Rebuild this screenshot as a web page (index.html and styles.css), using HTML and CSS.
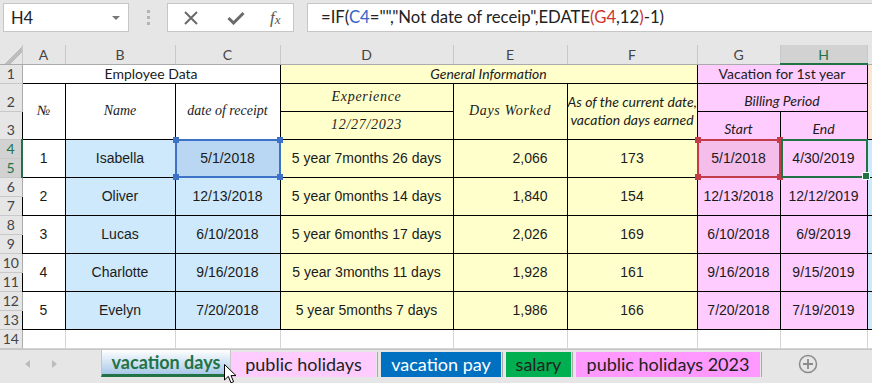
FILE: index.html
```html
<!DOCTYPE html>
<html lang="en">

<head>
    <meta charset="UTF-8">
    <meta name="viewport" content="width=device-width, initial-scale=1.0">
    <title>vacation days</title>
    <link rel="stylesheet" href="styles.css">
</head>

<body>
    <!-- formula bar -->
    <div class="bar">
        <div class="namebox">H4<i class="drop"></i></div>
        <div class="grip"><i></i><i></i><i></i></div>
        <div class="fxbox">
            <svg width="16" height="14" viewBox="0 0 16 14"><path d="M2 1 L14 13 M14 1 L2 13" stroke="#6a6a6a" stroke-width="2" fill="none"/></svg>
            <svg width="18" height="14" viewBox="0 0 18 14"><path d="M1.5 7 L6.5 12 L16.5 2" stroke="#6a6a6a" stroke-width="3" fill="none"/></svg>
            <span class="fx">f<sub>x</sub></span>
        </div>
        <div class="formula">=IF(<span class="rc">C4</span>="","Not date of receip",EDATE<span class="rg">(G4</span>,12<span class="rg">)</span>-1)</div>
    </div>

    <table class="sheet">
        <colgroup>
            <col style="width:22px">
            <col style="width:43px">
            <col style="width:110px">
            <col style="width:105px">
            <col style="width:173px">
            <col style="width:114px">
            <col style="width:130px">
            <col style="width:83px">
            <col style="width:87px">
            <col style="width:40px">
        </colgroup>
        <tr class="colhead">
            <th class="corner"></th>
            <th>A</th>
            <th>B</th>
            <th>C</th>
            <th>D</th>
            <th>E</th>
            <th>F</th>
            <th>G</th>
            <th class="on">H</th>
            <th></th>
        </tr>
        <tr>
            <th class="rn">1</th>
            <td colspan="3" class="w cal">Employee Data</td>
            <td colspan="3" class="y cali">General Information</td>
            <td colspan="2" class="p cal">Vacation for 1st year</td>
            <td rowspan="3" class="o"></td>
        </tr>
        <tr class="tall">
            <th class="rn">2</th>
            <td rowspan="2" class="w hs">№</td>
            <td rowspan="2" class="w hs">Name</td>
            <td rowspan="2" class="w hs">date of receipt</td>
            <td class="y hs wide">Experience</td>
            <td rowspan="2" class="y hs wide">Days Worked</td>
            <td rowspan="2" class="y small">As of the current date,<br>vacation days earned</td>
            <td colspan="2" class="p cali bot">Billing Period</td>
        </tr>
        <tr class="tall">
            <th class="rn">3</th>
            <td class="y hs wide">12/27/2023</td>
            <td class="p cali bot">Start</td>
            <td class="p cali bot">End</td>
        </tr>
        <tr>
            <th class="rn on">4</th>
            <td rowspan="2" class="w">1</td>
            <td rowspan="2" class="b">Isabella</td>
            <td rowspan="2" class="b selc">5/1/2018</td>
            <td rowspan="2" class="y">5 year 7months 26 days</td>
            <td rowspan="2" class="y num">2,066</td>
            <td rowspan="2" class="y">173</td>
            <td rowspan="2" class="p selg">5/1/2018</td>
            <td rowspan="2" class="p selh">4/30/2019</td>
            <td rowspan="2" class="b"></td>
        </tr>
        <tr>
            <th class="rn on">5</th>
        </tr>
        <tr>
            <th class="rn">6</th>
            <td rowspan="2" class="w">2</td>
            <td rowspan="2" class="b">Oliver</td>
            <td rowspan="2" class="b">12/13/2018</td>
            <td rowspan="2" class="y">5 year 0months 14 days</td>
            <td rowspan="2" class="y num">1,840</td>
            <td rowspan="2" class="y">154</td>
            <td rowspan="2" class="p">12/13/2018</td>
            <td rowspan="2" class="p">12/12/2019</td>
            <td rowspan="2" class="b"></td>
        </tr>
        <tr>
            <th class="rn">7</th>
        </tr>
        <tr>
            <th class="rn">8</th>
            <td rowspan="2" class="w">3</td>
            <td rowspan="2" class="b">Lucas</td>
            <td rowspan="2" class="b">6/10/2018</td>
            <td rowspan="2" class="y">5 year 6months 17 days</td>
            <td rowspan="2" class="y num">2,026</td>
            <td rowspan="2" class="y">169</td>
            <td rowspan="2" class="p">6/10/2018</td>
            <td rowspan="2" class="p">6/9/2019</td>
            <td rowspan="2" class="b"></td>
        </tr>
        <tr>
            <th class="rn">9</th>
        </tr>
        <tr>
            <th class="rn">10</th>
            <td rowspan="2" class="w">4</td>
            <td rowspan="2" class="b">Charlotte</td>
            <td rowspan="2" class="b">9/16/2018</td>
            <td rowspan="2" class="y">5 year 3months 11 days</td>
            <td rowspan="2" class="y num">1,928</td>
            <td rowspan="2" class="y">161</td>
            <td rowspan="2" class="p">9/16/2018</td>
            <td rowspan="2" class="p">9/15/2019</td>
            <td rowspan="2" class="b"></td>
        </tr>
        <tr>
            <th class="rn">11</th>
        </tr>
        <tr>
            <th class="rn">12</th>
            <td rowspan="2" class="w">5</td>
            <td rowspan="2" class="b">Evelyn</td>
            <td rowspan="2" class="b">7/20/2018</td>
            <td rowspan="2" class="y">5 year 5months 7 days</td>
            <td rowspan="2" class="y num">1,986</td>
            <td rowspan="2" class="y">166</td>
            <td rowspan="2" class="p">7/20/2018</td>
            <td rowspan="2" class="p">7/19/2019</td>
            <td rowspan="2" class="b"></td>
        </tr>
        <tr>
            <th class="rn">13</th>
        </tr>
        <tr class="empty">
            <th class="rn">14</th>
            <td></td>
            <td></td>
            <td></td>
            <td></td>
            <td></td>
            <td></td>
            <td></td>
            <td></td>
            <td></td>
        </tr>
    </table>

    <!-- sheet tabs -->
    <div class="tabs">
        <div class="nav"><i class="left"></i><i class="right"></i></div>
        <div class="tab active">vacation days</div>
        <div class="tab pink">public holidays</div>
        <div class="sep"></div>
        <div class="tab blue">vacation pay</div>
        <div class="sep"></div>
        <div class="tab green">salary</div>
        <div class="sep"></div>
        <div class="tab pink2">public holidays 2023</div>
        <div class="sep"></div>
        <div class="add">
            <svg width="20" height="20" viewBox="0 0 20 20"><circle cx="10" cy="10" r="8.5" stroke="#8a8a8a" stroke-width="1.5" fill="none"/><path d="M10 5 V15 M5 10 H15" stroke="#8a8a8a" stroke-width="1.8"/></svg>
        </div>
        <svg class="cursor" width="13" height="20" viewBox="0 0 13 20"><path d="M0.5 0.5 L0.5 16 L4.3 12.4 L7 18.8 L9.6 17.7 L7 11.6 L12 11.6 Z" fill="#fff" stroke="#000" stroke-width="1"/></svg>
    </div>
</body>

</html>
```

FILE: styles.css
```css
* {
    margin: 0;
    padding: 0;
    box-sizing: border-box;
}

body {
    width: 872px;
    height: 383px;
    overflow: hidden;
    background-color: #e6e6e6;
    font-family: "Liberation Sans", Arial, sans-serif;
    position: relative;
}

/* formula bar */
.bar {
    height: 45px;
    display: flex;
    align-items: flex-start;
    padding-top: 3px;
}

.namebox {
    margin-left: 3px;
    width: 126px;
    height: 29px;
    background-color: #fff;
    border: 1px solid #c6c6c6;
    display: flex;
    align-items: center;
    padding-left: 7px;
    font: 16.5px Lato, sans-serif;
    color: #222;
    position: relative;
}

.drop {
    position: absolute;
    right: 8px;
    top: 12px;
    border-left: 4px solid transparent;
    border-right: 4px solid transparent;
    border-top: 4px solid #777;
}

.grip {
    width: 38px;
    height: 29px;
    display: flex;
    flex-direction: column;
    align-items: center;
    justify-content: center;
    gap: 3px;
}

.grip i {
    width: 3px;
    height: 3px;
    background-color: #b3b3b3;
}

.fxbox {
    width: 127px;
    height: 29px;
    background-color: #fff;
    border: 1px solid #c6c6c6;
    display: flex;
    align-items: center;
    padding-left: 15px;
    gap: 28px;
}

.fx {
    font: italic 17px "Liberation Serif", serif;
    color: #555;
    margin-left: -3px;
}

.fx sub {
    font-size: 13px;
    vertical-align: -1px;
}

.formula {
    margin-left: 13px;
    flex: 1;
    height: 29px;
    background-color: #fff;
    border: 1px solid #c6c6c6;
    border-right: none;
    padding-left: 13px;
    font: 16.7px Lato, sans-serif;
    line-height: 27px;
    color: #222;
    white-space: nowrap;
}

.rc {
    color: #3566c8;
}

.rg {
    color: #cc3333;
}

/* sheet */
.sheet {
    border-collapse: collapse;
    table-layout: fixed;
    width: 907px;
}

.sheet tr {
    height: 19px;
}

.sheet tr.tall {
    height: 28px;
}

.sheet td {
    border: 1px solid #000;
    text-align: center;
    vertical-align: middle;
    font-size: 14px;
    color: #1b1b1b;
    white-space: nowrap;
    overflow: visible;
}

.colhead th {
    background-color: #e6e6e6;
    border-right: 1px solid #c8c8c8;
    border-bottom: 1px solid #ababab;
    font: 14px Lato, sans-serif;
    color: #444;
}

.colhead th.on {
    background-color: #d2d2d2;
    color: #217346;
    border-bottom: 2px solid #217346;
}

.corner {
    background: linear-gradient(135deg, #e6e6e6 58%, #bdbdbd 58%, #bdbdbd 72%, #e6e6e6 72%) !important;
}

.rn {
    background-color: #e6e6e6;
    border-right: 1px solid #ababab;
    border-bottom: 1px solid #c8c8c8;
    vertical-align: bottom;
    font: 14px Lato, sans-serif;
    line-height: 18px;
    color: #444;
}

.rn.on {
    background-color: #d2d2d2;
    color: #217346;
    border-right: 2px solid #217346;
}

.w {
    background-color: #fff;
}

.b {
    background-color: #cde9fb;
}

.y {
    background-color: #ffffcc;
}

.p {
    background-color: #ffccff;
}

.o {
    background-color: #fce4d6;
}

.cal {
    font: 14px Lato, sans-serif;
}

.cali {
    font: italic 14px Lato, sans-serif;
}

.hs {
    font: italic 15.5px "Liberation Serif", serif;
}

.sheet td.wide {
    letter-spacing: 0.7px;
}

.small {
    font: italic 12px Lato, sans-serif;
    line-height: 18px;
}

.sheet td.bot {
    vertical-align: bottom;
    line-height: 20px;
}

.sheet td.num {
    text-align: right;
    padding-right: 19px;
}

.empty td {
    border-color: #d4d4d4;
    background-color: #fff;
}

/* selections */
.selc,
.selg,
.selh {
    position: relative;
}

.selc {
    background-color: #b9d7f3;
}

.selg {
    background-color: #f5bde9;
}

.selc::before,
.selg::before,
.selh::before {
    content: "";
    position: absolute;
    left: -1px;
    top: -1px;
    right: -1px;
    bottom: -1px;
    border: 2px solid #3d72c6;
}

.selg::before {
    border-color: #c23c4c;
}

.selh::before {
    border-color: #217346;
    left: 0;
}

.selc::after,
.selg::after,
.selh::after {
    content: "";
    position: absolute;
    width: 6px;
    height: 6px;
    left: -3px;
    top: -3px;
    background-color: #3d72c6;
    box-shadow: 104px 0 #3d72c6, 0 37px #3d72c6, 104px 37px #3d72c6;
}

.selg::after {
    background-color: #c23c4c;
    box-shadow: 82px 0 #c23c4c, 0 37px #c23c4c, 82px 37px #c23c4c;
}

.selh::after {
    left: auto;
    top: auto;
    right: -3px;
    bottom: -3px;
    background-color: #217346;
    box-shadow: none;
    border: 1px solid #fff;
}

/* tabs */
.tabs {
    height: 35px;
    border-top: 1px solid #c6c6c6;
    display: flex;
    align-items: flex-start;
    padding-top: 2px;
    position: relative;
}

.nav {
    width: 101px;
    height: 25px;
    display: flex;
    align-items: center;
    padding-left: 25px;
    gap: 22px;
}

.nav i {
    width: 0;
    height: 0;
    border-top: 4px solid transparent;
    border-bottom: 4px solid transparent;
}

.nav .left {
    border-right: 5px solid #bcbcbc;
}

.nav .right {
    border-left: 5px solid #bcbcbc;
}

.tab {
    height: 25px;
    display: flex;
    align-items: center;
    justify-content: center;
    font: 18px Lato, sans-serif;
    color: #222;
}

.active {
    width: 130px;
    font-weight: bold;
    color: #217346;
    background: linear-gradient(#ffffff, #a8c8e8);
    border-left: 1px solid #c6c6c6;
    border-right: 1px solid #c6c6c6;
    border-bottom: 3px solid #217346;
    margin-top: -2px;
    height: 27px;
    padding-top: 1px;
}

.pink {
    width: 145px;
    background-color: #ffccff;
}

.blue {
    width: 120px;
    background-color: #0070c0;
    color: #fff;
}

.green {
    width: 65px;
    background-color: #00b050;
}

.pink2 {
    width: 184px;
    background-color: #ff99ff;
}

.sep {
    width: 4px;
    height: 25px;
    border-left: 1px solid #a8a8a8;
    margin-left: 1px;
}

.add {
    margin-left: 33px;
    height: 25px;
    display: flex;
    align-items: center;
}

.cursor {
    position: absolute;
    left: 224px;
    top: 14px;
}
```
